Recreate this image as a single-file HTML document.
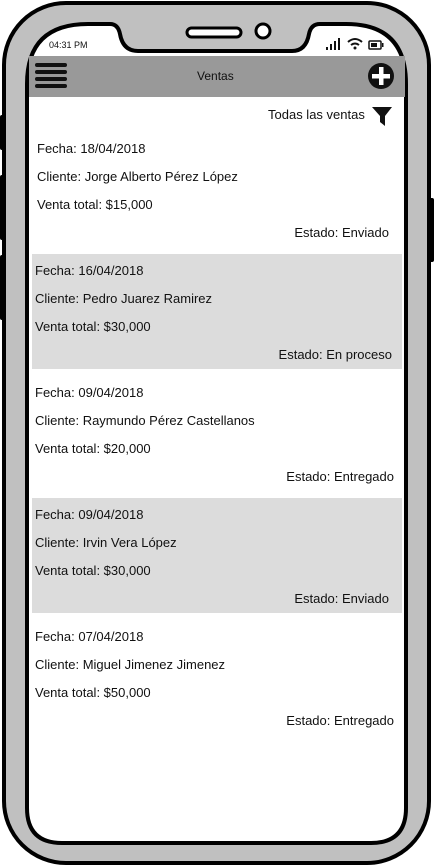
<!DOCTYPE html>
<html><head><meta charset="utf-8"><style>
html,body{margin:0;padding:0;width:434px;height:867px;overflow:hidden;background:#fff;font-family:"Liberation Sans",sans-serif;}
.t{position:absolute;font-size:13px;color:#111;white-space:nowrap;line-height:16px;}
.r{text-align:right;}
.card{position:absolute;left:32px;width:370px;height:115px;background:#dcdcdc;}
</style></head><body>
<svg width="434" height="867" style="position:absolute;left:0;top:0">
 <rect x="0" y="115" width="8" height="35" rx="2" fill="#000"/>
 <rect x="0" y="175" width="8" height="65" rx="2" fill="#000"/>
 <rect x="0" y="255" width="8" height="65" rx="2" fill="#000"/>
 <rect x="426" y="198" width="8" height="64" rx="2" fill="#000"/>
 <rect x="4" y="3" width="425" height="860" rx="62" fill="#c0c0c0" stroke="#000" stroke-width="4"/>
 <path d="M88 24 L110 24 Q118 24 120 34 Q123 51 138 51 L292 51 Q306 51 309 34 Q311 24 320 24 L346 24 Q406 24 406 84 L406 808 Q406 843 371 843 L62 843 Q27 843 27 808 L27 84 Q27 24 88 24 Z" fill="#fff" stroke="#000" stroke-width="4"/>
 <rect x="187" y="28" width="54" height="9" rx="4.5" fill="#fff" stroke="#000" stroke-width="3"/>
 <ellipse cx="263" cy="31" rx="7" ry="7" fill="#fff" stroke="#000" stroke-width="3"/>
 <rect x="29" y="56" width="376" height="41" fill="#999"/>
 <g fill="#111"><rect x="35" y="63" width="32" height="4" rx="2"/><rect x="35" y="70" width="32" height="4" rx="2"/><rect x="35" y="77" width="32" height="4" rx="2"/><rect x="35" y="84" width="32" height="4" rx="2"/></g>
 <circle cx="381" cy="76" r="13" fill="#111"/>
 <rect x="379" y="67" width="4.5" height="18" fill="#fff"/><rect x="372" y="74" width="18" height="4.5" fill="#fff"/>
 <path d="M372 107 L392 107 L385 116 L385 126 L380 122 L380 116 Z" fill="#111"/>
 <g fill="#111"><rect x="326" y="47" width="2" height="3"/><rect x="330" y="44" width="2" height="6"/><rect x="334" y="41" width="2" height="9"/><rect x="338" y="38" width="2" height="12"/></g>
 <path d="M348 42 Q355 36 362 42 M351 45 Q355 42 359 45" stroke="#111" stroke-width="2" fill="none"/><circle cx="355" cy="48" r="1.5" fill="#111"/>
 <rect x="369" y="41" width="12" height="8" rx="1" fill="none" stroke="#111" stroke-width="1.5"/><rect x="371" y="43" width="6" height="4" fill="#111"/><rect x="382" y="43" width="1.5" height="4" fill="#111"/>
</svg>
<div class="t" style="left:49px;top:37px;font-size:9px;">04:31 PM</div>
<div class="t" style="left:197px;top:68px;font-size:12px;">Ventas</div>
<div class="t" style="left:268px;top:107px;">Todas las ventas</div>

<div class="t" style="left:37px;top:141px;">Fecha: 18/04/2018</div>
<div class="t" style="left:37px;top:169px;">Cliente: Jorge Alberto Pérez López</div>
<div class="t" style="left:37px;top:197px;">Venta total: $15,000</div>
<div class="t r" style="right:45px;top:225px;">Estado: Enviado</div>

<div class="card" style="top:254px"></div>
<div class="t" style="left:35px;top:263px;">Fecha: 16/04/2018</div>
<div class="t" style="left:35px;top:291px;">Cliente: Pedro Juarez Ramirez</div>
<div class="t" style="left:35px;top:319px;">Venta total: $30,000</div>
<div class="t r" style="right:42px;top:347px;">Estado: En proceso</div>

<div class="t" style="left:35px;top:385px;">Fecha: 09/04/2018</div>
<div class="t" style="left:35px;top:413px;">Cliente: Raymundo Pérez Castellanos</div>
<div class="t" style="left:35px;top:441px;">Venta total: $20,000</div>
<div class="t r" style="right:40px;top:469px;">Estado: Entregado</div>

<div class="card" style="top:498px"></div>
<div class="t" style="left:35px;top:507px;">Fecha: 09/04/2018</div>
<div class="t" style="left:35px;top:535px;">Cliente: Irvin Vera López</div>
<div class="t" style="left:35px;top:563px;">Venta total: $30,000</div>
<div class="t r" style="right:45px;top:591px;">Estado: Enviado</div>

<div class="t" style="left:35px;top:629px;">Fecha: 07/04/2018</div>
<div class="t" style="left:35px;top:657px;">Cliente: Miguel Jimenez Jimenez</div>
<div class="t" style="left:35px;top:685px;">Venta total: $50,000</div>
<div class="t r" style="right:40px;top:713px;">Estado: Entregado</div>
</body></html>
